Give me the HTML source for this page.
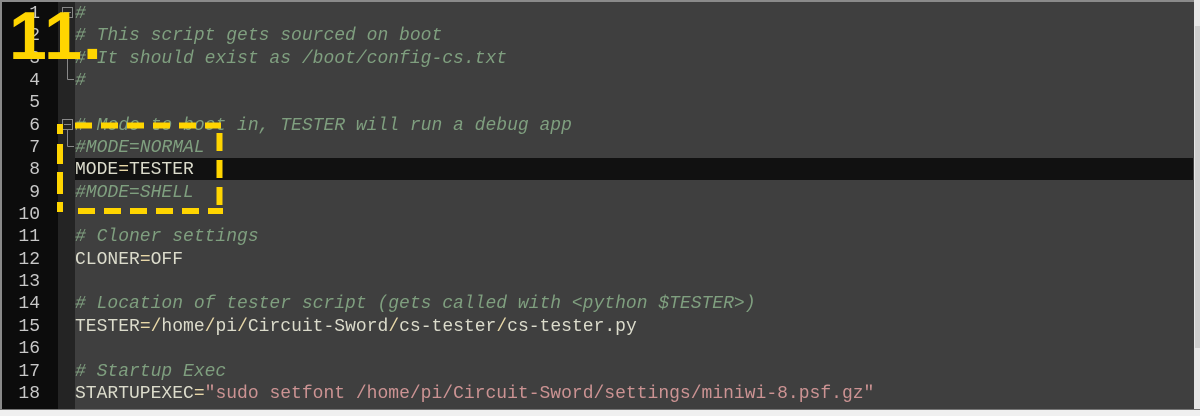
<!DOCTYPE html>
<html><head><style>
body{margin:0;width:1200px;height:415px;overflow:hidden;background:#f0f0f0;position:relative;font-family:Consolas,"Liberation Mono",monospace;}
#frame{position:absolute;left:0;top:0;width:1194px;height:409px;background:#3f3f3f;border-top:2px solid #8a8a8a;border-left:2px solid #8a8a8a;box-sizing:border-box;}
#gut{position:absolute;left:2px;top:2px;width:56px;height:407px;background:#0c0c0c;}
#fold{position:absolute;left:58px;top:2px;width:17px;height:407px;background:#242424;}
#cur{position:absolute;left:75px;top:158px;width:1118px;height:22px;background:#111;}
.ln{position:absolute;left:0;width:40px;text-align:right;color:#c8c8c8;font-size:18px;line-height:22.35px;}
.cd{position:absolute;left:75px;font-size:18px;line-height:22.35px;color:#dcdccc;white-space:pre;}
.c{color:#7f9f7f;font-style:italic}
.o{color:#e8d8a8}
.s{color:#cc9393}
#sb{position:absolute;left:1194px;top:0;width:6px;height:415px;background:#e8e8e8;}
#sb2{position:absolute;left:1195px;top:26px;width:5px;height:322px;background:#cfcfcf;}
#bot{position:absolute;left:0;top:409px;width:1200px;height:6px;background:#f0f0f0;border-top:1px solid #777;}
#big{position:absolute;left:9px;top:-3px;font-family:"Liberation Sans",sans-serif;font-weight:bold;font-size:68px;color:#ffd500;letter-spacing:1px;}
</style></head><body>
<div id="frame"></div>
<div id="gut"></div><div id="fold"></div><div id="cur"></div>
<svg style="position:absolute;left:0;top:0" width="1200" height="415">
<g stroke="#888" fill="none" stroke-width="1">
<rect x="62.5" y="7.5" width="10" height="10"/><line x1="64" y1="12.5" x2="71" y2="12.5"/><line x1="67.5" y1="18" x2="67.5" y2="79.5"/><line x1="67.5" y1="79.5" x2="74" y2="79.5"/>
<rect x="62.5" y="119.5" width="10" height="10"/><line x1="64" y1="124.5" x2="71" y2="124.5"/><line x1="67.5" y1="130" x2="67.5" y2="146.5"/><line x1="67.5" y1="146.5" x2="74" y2="146.5"/>
</g>
</svg>
<div class="ln" style="top:3px">1<br>2<br>3<br>4<br>5<br>6<br>7<br>8<br>9<br>10<br>11<br>12<br>13<br>14<br>15<br>16<br>17<br>18</div>
<div class="cd" style="top:3px"><span class="c">#
# This script gets sourced on boot
# It should exist as /boot/config-cs.txt
#</span>

<span class="c"># Mode to boot in, TESTER will run a debug app
#MODE=NORMAL</span>
MODE<span class="o">=</span>TESTER
<span class="c">#MODE=SHELL</span>

<span class="c"># Cloner settings</span>
CLONER<span class="o">=</span>OFF

<span class="c"># Location of tester script (gets called with &lt;python $TESTER&gt;)</span>
TESTER<span class="o">=/</span>home<span class="o">/</span>pi<span class="o">/</span>Circuit-Sword<span class="o">/</span>cs-tester<span class="o">/</span>cs-tester.py

<span class="c"># Startup Exec</span>
STARTUPEXEC<span class="o">=</span><span class="s">"sudo setfont /home/pi/Circuit-Sword/settings/miniwi-8.psf.gz"</span></div>
<div id="sb"></div><div id="sb2"></div><div id="bot"></div>
<div id="big">11.</div>
<svg style="position:absolute;left:0;top:0" width="1200" height="415">
<g stroke="#ffd500" stroke-width="6" fill="none">
<line x1="75" y1="125.5" x2="221" y2="125.5" stroke-dasharray="17 9"/>
<line x1="219.5" y1="133" x2="219.5" y2="207" stroke-dasharray="18 9"/>
<line x1="60" y1="124" x2="60" y2="212" stroke-dasharray="10 10 20 8 22 8 20 8"/>
<line x1="78" y1="211" x2="223" y2="211" stroke-dasharray="17 9"/>
</g>
</svg>
</body></html>
